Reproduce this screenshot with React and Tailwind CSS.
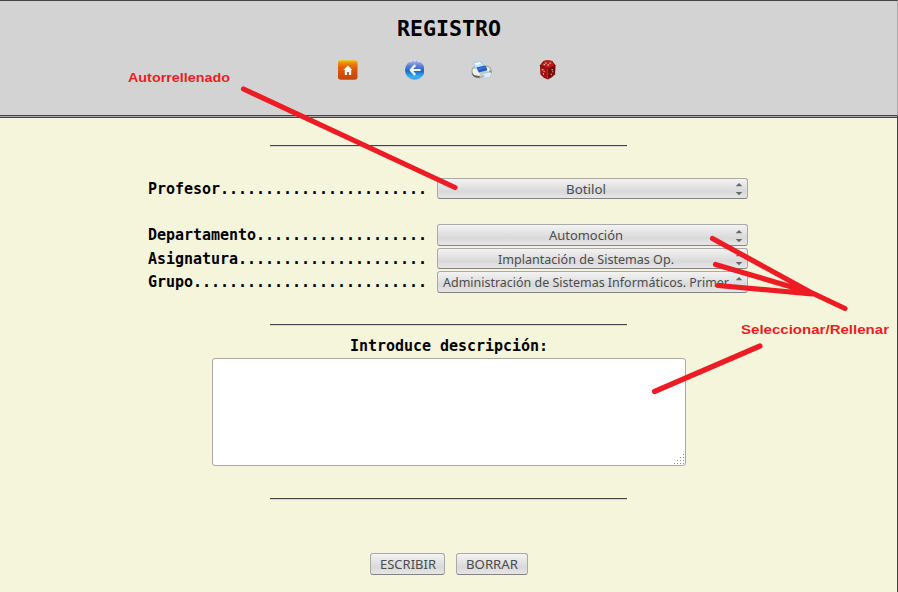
import React from "react";

const HomeIcon = () => (
  <svg width="20" height="20" viewBox="0 0 20 20">
    <defs>
      <linearGradient id="home" x1="0" y1="0" x2="0" y2="1">
        <stop offset="0" stopColor="#f5c400" />
        <stop offset=".16" stopColor="#ee8508" />
        <stop offset=".4" stopColor="#dc5b0c" />
        <stop offset="1" stopColor="#c9420d" />
      </linearGradient>
    </defs>
    <rect width="20" height="20" rx="2.5" fill="url(#home)" />
    <path d="M0 9Q10 8 18 3L20 5V8Q11 9 0 10Z" fill="#f07a08" opacity=".3" />
    <path d="M10 5.5L14.5 10H13.5V15H11.2V12H9.2V15H7V10H5.5Z" fill="#fff" />
  </svg>
);

const BackIcon = () => (
  <svg width="20" height="20" viewBox="0 0 20 20">
    <defs>
      <linearGradient id="back" x1="0" y1="0" x2="0" y2="1">
        <stop offset="0" stopColor="#aebce8" />
        <stop offset=".3" stopColor="#5a7fd6" />
        <stop offset=".55" stopColor="#1e63d0" />
        <stop offset=".85" stopColor="#35b4f0" />
        <stop offset="1" stopColor="#4a9ade" />
      </linearGradient>
    </defs>
    <circle cx="10" cy="10" r="10" fill="url(#back)" />
    <path d="M10.5 5L5.8 10L10.5 15M6.5 10H16" fill="none" stroke="#f3f3f3" strokeWidth="2.3" strokeLinejoin="round" />
    <path d="M5 1.2L7 .8M9 .6H11M13 .9L15 1.4" stroke="#eef2ff" strokeWidth="1" />
  </svg>
);

const PrinterIcon = () => (
  <svg width="22" height="20" viewBox="0 0 22 20">
    <path d="M1 10Q1 7 4 7L17 6Q21 7 21 11V13L9 18Q2 18 1 14Z" fill="#c9c9c4" stroke="#8b8983" strokeWidth=".6" />
    <path d="M1 12Q2 16 9 15V18Q1 18 1 12Z" fill="#5e5c58" />
    <path d="M2.5 3L10 1L13 6L5 9Z" fill="#c4e3fa" stroke="#93bde4" strokeWidth=".6" />
    <path d="M3.5 3.2L9 2L10 3.5L5 5Z" fill="#f4fbff" />
    <path d="M2 9L7 8.5L9 14V16.5L4 15.5Q1 13.5 2 9Z" fill="#efefeb" />
    <path d="M5.5 7.5L14.5 5.5L17.5 10L8 12.5Z" fill="#1f5fc8" />
    <path d="M7 8.5L14 6.5L15 8L8 10Z" fill="#3477dc" />
    <path d="M16 7L19 8V11L17 12Z" fill="#eeeeea" />
    <path d="M10 14.5L20 12L21 14L19 17.5L12 18.5L14 16Z" fill="#dceffb" stroke="#9bc6e6" strokeWidth=".5" />
    <circle cx="19.5" cy="11.5" r="1" fill="#58af46" />
  </svg>
);

const DiceIcon = () => (
  <svg width="18" height="20" viewBox="0 0 18 20">
    <path d="M4.5 .7Q9-.6 13.5 .7L17 5L16.5 14.5L12.5 18L9 19.8L5 18L1.5 14.5L1 5Z" fill="#860b0b" />
    <path d="M4.5 .7Q9-.4 13.5 .7L16 5L9 8.5L2 5Z" fill="#bd1714" />
    <path d="M1.7 6.5L8.5 9V18L5 17L2.2 13.5Z" fill="#a41110" />
    <path d="M9 9L16 6.5L15.5 14L9.3 18.5Z" fill="#700909" />
    <path d="M8.9 8.7V19" stroke="#d83b32" strokeWidth=".8" />
    <g fill="#e9cecb">
      <ellipse cx="7" cy="2.8" rx="1.1" ry=".6" /><ellipse cx="11.5" cy="2.8" rx="1.1" ry=".6" />
      <ellipse cx="5.5" cy="4.4" rx="1" ry=".6" /><ellipse cx="9.5" cy="4.8" rx="1.1" ry=".6" />
      <ellipse cx="3.7" cy="9.8" rx=".9" ry=".7" /><ellipse cx="5.2" cy="11.5" rx=".6" ry=".8" /><ellipse cx="4.5" cy="14" rx=".6" ry=".8" />
      <ellipse cx="13.5" cy="9.8" rx=".7" ry=".8" /><ellipse cx="14.2" cy="11.8" rx=".5" ry=".8" /><ellipse cx="12.5" cy="14.5" rx=".6" ry=".8" />
    </g>
  </svg>
);

const control =
  "border border-[#aaa8aa] border-b-[#858287] rounded-[3px] bg-linear-to-b from-[#f3f3f3] via-[#d9d9d9] via-65% to-[#e6e6e6] text-[#4c4c4c] font-['Noto_Sans',sans-serif] whitespace-nowrap";

function Row({ label, value, height, width, clipped }) {
  return (
    <div className="flex items-center">
      <div className="w-[289px] whitespace-pre text-[15px] leading-[20px] font-bold tracking-[-0.03px]">{label.padEnd(31, ".")}</div>
      <button className={`${control} ${height} flex w-[311px] items-center pl-[5px] pr-[4.5px] text-[13px]`}>
        <span className={`flex h-full w-[288px] items-center ${clipped ? "justify-start" : "justify-center pr-[3px]"}`}>
          <svg className="h-[18px] overflow-visible" width={width} height="18">
            <text x="0" y="13.5" textLength={width} lengthAdjust="spacingAndGlyphs" fill="currentColor">{value}</text>
          </svg>
        </span>
        <svg className="ml-auto shrink-0" width="8" height="15" viewBox="0 0 8 15">
          <path d="M.7 5.3L4 2L7.3 5.3ZM.7 11L4 14.3L7.3 11Z" fill="#686868" />
        </svg>
      </button>
    </div>
  );
}

const Rule = () => <div className="ml-[270px] h-[2px] w-[357px] border-t border-[#45434a] border-b border-b-[#d9d8d0]" />;

export default function App() {
  return (
    <div className="relative flex h-[592px] w-[898px] flex-col overflow-hidden bg-[#f5f5dc] font-['DejaVu_Sans_Mono',monospace] text-black">
      <header className="flex h-[116px] shrink-0 flex-col items-center border-t border-b border-r border-t-[#454345] border-b-[#454345] border-r-[#aaa] bg-[#d3d3d3]">
        <h1 className="mt-[14px] pl-px text-[21.6px] leading-[28px] font-bold">REGISTRO</h1>
        <nav className="mt-[17px] mr-[2px] flex w-[219px] items-center gap-[47px]">
          <HomeIcon /><BackIcon /><PrinterIcon /><DiceIcon />
        </nav>
      </header>
      <main className="flex-1 border-r border-r-[#454345]">
        <div className="h-[2px] border-b border-[#454345] bg-[#aaa]" />
        <div className="pt-[27px]"><Rule /></div>
        <div className="flex flex-col pl-[148px] pt-[31px]">
          <Row label="Profesor" value="Botilol" height="h-[21px]" width={40} />
          <div className="h-[25px]" />
          <Row label="Departamento" value="Automoción" height="h-[22px]" width={74} />
          <div className="h-[2px]" />
          <Row label="Asignatura" value="Implantación de Sistemas Op." height="h-[21px]" width={176} />
          <div className="h-[2px]" />
          <Row label="Grupo" value="Administración de Sistemas Informáticos. Primer" height="h-[22px]" width={286} clipped />
        </div>
        <div className="pt-[31px]"><Rule /></div>
        <div className="pl-px pt-[10px] text-center text-[15px] leading-[20px] font-bold tracking-[-0.03px]">Introduce descripción:</div>
        <div className="ml-[212px] mt-[2px] flex h-[108px] w-[474px] items-end justify-end rounded-[3px] border border-[#aaa8a2] bg-white">
          <svg width="11" height="11" viewBox="0 0 11 11" fill="#8b8b8b">
            <path d="M9 0h1v1H9zM6 3h1v1H6zM9 3h1v1H9zM3 6h1v1H3zM6 6h1v1H6zM9 6h1v1H9zM0 9h1v1H0zM3 9h1v1H3zM6 9h1v1H6zM9 9h1v1H9z" />
          </svg>
        </div>
        <div className="pt-[32px]"><Rule /></div>
        <div className="ml-[370px] mt-[53px] flex gap-[11px] text-[13px]">
          <button className={`${control} flex h-[22px] w-[75px] items-center justify-center`}>
            <svg className="overflow-visible" width="56" height="18"><text y="13.5" textLength="56" lengthAdjust="spacingAndGlyphs" fill="currentColor">ESCRIBIR</text></svg>
          </button>
          <button className={`${control} flex h-[22px] w-[72px] items-center justify-center`}>
            <svg className="overflow-visible" width="52" height="18"><text y="13.5" textLength="52" lengthAdjust="spacingAndGlyphs" fill="currentColor">BORRAR</text></svg>
          </button>
        </div>
      </main>
      <svg className="pointer-events-none absolute left-0 top-0" width="898" height="592" fill="none">
        <g stroke="#ed1c24" strokeWidth="5.2" strokeLinecap="round">
          <path d="M243.5 89L455 187.5M712.5 238.5L812 293M715.5 264.5L812 293L845 308.5M718 285.5L812 294M760 346L654.5 391.5" />
        </g>
        <g fill="#ed1c24" className="font-['Liberation_Sans',sans-serif] text-[13px] font-bold">
          <text x="128" y="82" textLength="102" lengthAdjust="spacingAndGlyphs">Autorrellenado</text>
          <text x="741" y="334" textLength="148" lengthAdjust="spacingAndGlyphs">Seleccionar/Rellenar</text>
        </g>
      </svg>
    </div>
  );
}
